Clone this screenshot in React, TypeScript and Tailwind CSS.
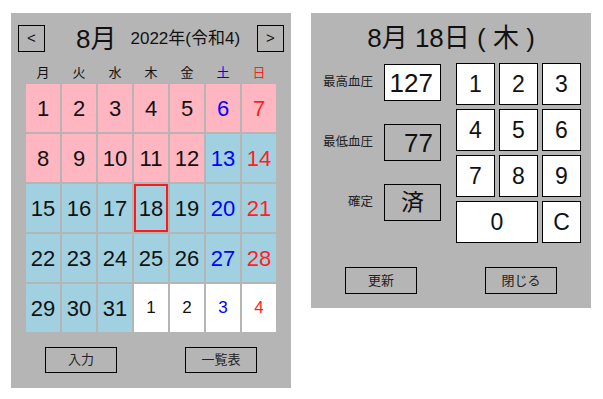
import React from "react";

const FONT = { fontFamily: '"Liberation Sans", "Noto Sans CJK JP", sans-serif' };

type Cell = { d: number; cur: boolean };

const rows: Cell[][] = [];
{
  const all: Cell[] = [];
  for (let i = 1; i <= 31; i++) all.push({ d: i, cur: true });
  for (let i = 1; i <= 4; i++) all.push({ d: i, cur: false });
  for (let r = 0; r < 5; r++) rows.push(all.slice(r * 7, r * 7 + 7));
}

const weekdays = ["月", "火", "水", "木", "金", "土", "日"];

function colorFor(col: number) {
  if (col === 5) return "text-[#0000ff]";
  if (col === 6) return "text-[#ff1f1f]";
  return "text-[#111]";
}

function CalendarPanel() {
  return (
    <div className="w-[280px] h-[375px] bg-[#b5b5b5] flex flex-col pt-[12px]">
      <div className="flex items-center h-[27px] pl-[7px] pr-[7px]">
        <div className="w-[27px] h-[27px] border border-black flex items-center justify-center text-[15px] text-[#111]">
          &lt;
        </div>
        <div className="ml-[31px] text-[26px] leading-none text-[#111]">8月</div>
        <div className="ml-[14px] text-[17px] leading-none text-[#111]">2022年(令和4)</div>
        <div className="ml-auto w-[27px] h-[27px] border border-black flex items-center justify-center text-[15px] text-[#111]">
          &gt;
        </div>
      </div>
      <div className="mt-[10px] ml-[15px] grid grid-cols-[repeat(7,34px)] gap-x-[2px] h-[22px]">
        {weekdays.map((w, i) => (
          <div key={w} className={`flex items-center justify-center text-[13px] ${colorFor(i)}`}>
            {w}
          </div>
        ))}
      </div>
      <div className="ml-[15px] grid grid-cols-[repeat(7,34px)] auto-rows-[48px] gap-[2px]">
        {rows.map((row, r) =>
          row.map((c, i) => {
            const bg = !c.cur ? "bg-white" : c.d <= 12 ? "bg-[#ffb6c1]" : "bg-[#a1d1e0]";
            const sel = c.cur && c.d === 18;
            return (
              <div
                key={`${r}-${i}`}
                className={`${bg} flex items-center justify-center ${colorFor(i)} ${
                  c.cur ? "text-[22px]" : "text-[17px]"
                } ${sel ? "border-2 border-[#ff1a1a]" : ""}`}
              >
                {c.d}
              </div>
            );
          })
        )}
      </div>
      <div className="flex mt-[15px]">
        <div className="ml-[34px] w-[72px] h-[26px] border border-black flex items-center justify-center text-[13px] text-[#222]">
          入力
        </div>
        <div className="ml-[68px] w-[72px] h-[26px] border border-black flex items-center justify-center text-[13px] text-[#222]">
          一覧表
        </div>
      </div>
    </div>
  );
}

function Key({ label, wide }: { label: string; wide?: boolean }) {
  return (
    <div
      className={`${wide ? "col-span-2" : ""} h-[42px] bg-white border border-black flex items-center justify-center text-[23px] text-[#111]`}
    >
      {label}
    </div>
  );
}

function InputPanel() {
  return (
    <div className="w-[280px] h-[295px] bg-[#b5b5b5] flex flex-col">
      <div className="h-[50px] flex items-center justify-center text-[26px] text-[#111] leading-none">
        8月 18日 ( 木 )
      </div>
      <div className="flex">
        <div className="w-[62px] mt-[1px] flex flex-col gap-[23px]">
          {["最高血圧", "最低血圧", "確定"].map((l) => (
            <div key={l} className="h-[37px] flex items-center justify-end text-[12.5px] text-[#222] whitespace-nowrap">
              {l}
            </div>
          ))}
        </div>
        <div className="ml-[11px] w-[57px] mt-[1px] flex flex-col gap-[23px]">
          <div className="h-[37px] bg-white border border-black flex items-center justify-end pr-[7px] text-[26px] text-[#111] leading-none">
            127
          </div>
          <div className="h-[37px] border border-black flex items-center justify-end pr-[7px] text-[26px] text-[#111] leading-none">
            77
          </div>
          <div className="h-[37px] border border-black flex items-center justify-center text-[23px] text-[#111] leading-none">
            済
          </div>
        </div>
        <div className="ml-[15px] grid grid-cols-[repeat(3,39px)] gap-[4px]">
          <Key label="1" />
          <Key label="2" />
          <Key label="3" />
          <Key label="4" />
          <Key label="5" />
          <Key label="6" />
          <Key label="7" />
          <Key label="8" />
          <Key label="9" />
          <Key label="0" wide />
          <Key label="C" />
        </div>
      </div>
      <div className="flex mt-[24px]">
        <div className="ml-[34px] w-[72px] h-[27px] border border-black flex items-center justify-center text-[13px] text-[#222]">
          更新
        </div>
        <div className="ml-[68px] w-[72px] h-[27px] border border-black flex items-center justify-center text-[13px] text-[#222]">
          閉じる
        </div>
      </div>
    </div>
  );
}

export default function App() {
  return (
    <div className="w-[603px] h-[399px] bg-white flex items-start pl-[11px] pt-[13px] gap-[20px]" style={FONT}>
      <CalendarPanel />
      <InputPanel />
    </div>
  );
}
